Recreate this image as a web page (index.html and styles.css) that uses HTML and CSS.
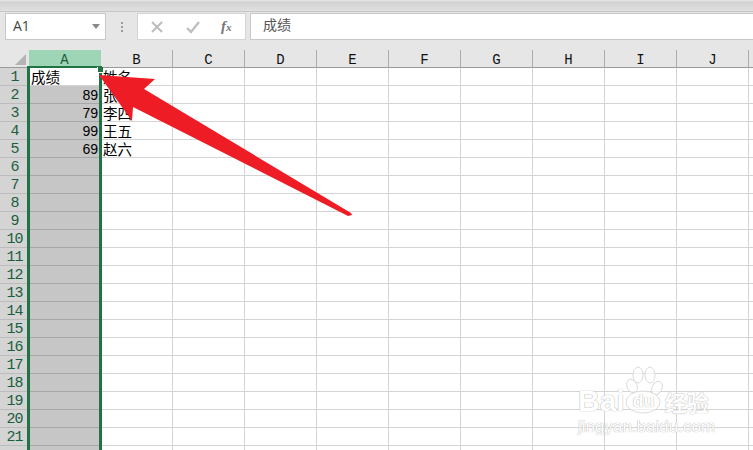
FILE: index.html
```html
<!DOCTYPE html>
<html lang="zh">
<head>
<meta charset="utf-8">
<title>成绩</title>
<link rel="stylesheet" href="styles.css">
</head>
<body>
<div class="app">
  <div class="topbar"></div>
  <div class="fbar">
    <div class="namebox"><span>A1</span><i class="caret"></i></div>
    <div class="dots"><b></b><b></b><b></b></div>
    <div class="fxbox">
      <svg class="ico" viewBox="0 0 14 14"><path d="M2 2 L12 12 M12 2 L2 12" fill="none" stroke="#bcbcbc" stroke-width="2"/></svg>
      <svg class="ico" viewBox="0 0 14 14"><path d="M1 8 L5 12 L13 2" fill="none" stroke="#c0c0c0" stroke-width="2.4"/></svg>
      <span class="fx">f<span class="fx-x">x</span></span>
    </div>
    <div class="finput">成绩</div>
  </div>
  <div class="sheet">
    <table class="grid">
      <thead>
        <tr><th class="corner"><i></i></th><th class="sel">A</th><th>B</th><th>C</th><th>D</th><th>E</th><th>F</th><th>G</th><th>H</th><th>I</th><th>J</th><th></th></tr>
      </thead>
      <tbody>
        <tr><th>1</th><td class="a1 cjk">成绩</td><td class="cjk">姓名</td><td></td><td></td><td></td><td></td><td></td><td></td><td></td><td></td><td></td></tr>
        <tr><th>2</th><td class="ca num">89</td><td class="cjk">张三</td><td></td><td></td><td></td><td></td><td></td><td></td><td></td><td></td><td></td></tr>
        <tr><th>3</th><td class="ca num">79</td><td class="cjk">李四</td><td></td><td></td><td></td><td></td><td></td><td></td><td></td><td></td><td></td></tr>
        <tr><th>4</th><td class="ca num">99</td><td class="cjk">王五</td><td></td><td></td><td></td><td></td><td></td><td></td><td></td><td></td><td></td></tr>
        <tr><th>5</th><td class="ca num">69</td><td class="cjk">赵六</td><td></td><td></td><td></td><td></td><td></td><td></td><td></td><td></td><td></td></tr>
        <tr><th>6</th><td class="ca"></td><td></td><td></td><td></td><td></td><td></td><td></td><td></td><td></td><td></td><td></td></tr>
        <tr><th>7</th><td class="ca"></td><td></td><td></td><td></td><td></td><td></td><td></td><td></td><td></td><td></td><td></td></tr>
        <tr><th>8</th><td class="ca"></td><td></td><td></td><td></td><td></td><td></td><td></td><td></td><td></td><td></td><td></td></tr>
        <tr><th>9</th><td class="ca"></td><td></td><td></td><td></td><td></td><td></td><td></td><td></td><td></td><td></td><td></td></tr>
        <tr><th>10</th><td class="ca"></td><td></td><td></td><td></td><td></td><td></td><td></td><td></td><td></td><td></td><td></td></tr>
        <tr><th>11</th><td class="ca"></td><td></td><td></td><td></td><td></td><td></td><td></td><td></td><td></td><td></td><td></td></tr>
        <tr><th>12</th><td class="ca"></td><td></td><td></td><td></td><td></td><td></td><td></td><td></td><td></td><td></td><td></td></tr>
        <tr><th>13</th><td class="ca"></td><td></td><td></td><td></td><td></td><td></td><td></td><td></td><td></td><td></td><td></td></tr>
        <tr><th>14</th><td class="ca"></td><td></td><td></td><td></td><td></td><td></td><td></td><td></td><td></td><td></td><td></td></tr>
        <tr><th>15</th><td class="ca"></td><td></td><td></td><td></td><td></td><td></td><td></td><td></td><td></td><td></td><td></td></tr>
        <tr><th>16</th><td class="ca"></td><td></td><td></td><td></td><td></td><td></td><td></td><td></td><td></td><td></td><td></td></tr>
        <tr><th>17</th><td class="ca"></td><td></td><td></td><td></td><td></td><td></td><td></td><td></td><td></td><td></td><td></td></tr>
        <tr><th>18</th><td class="ca"></td><td></td><td></td><td></td><td></td><td></td><td></td><td></td><td></td><td></td><td></td></tr>
        <tr><th>19</th><td class="ca"></td><td></td><td></td><td></td><td></td><td></td><td></td><td></td><td></td><td></td><td></td></tr>
        <tr><th>20</th><td class="ca"></td><td></td><td></td><td></td><td></td><td></td><td></td><td></td><td></td><td></td><td></td></tr>
        <tr><th>21</th><td class="ca"></td><td></td><td></td><td></td><td></td><td></td><td></td><td></td><td></td><td></td><td></td></tr>
        <tr><th></th><td class="ca"></td><td></td><td></td><td></td><td></td><td></td><td></td><td></td><td></td><td></td><td></td></tr>
      </tbody>
    </table>
    <div class="selection"><i class="handle"></i></div>
  </div>
  <div class="watermark">
    <svg class="paw" viewBox="0 0 46 50">
      <g fill="#fff" fill-opacity="0.65" stroke="#dcdcdc" stroke-width="1">
        <ellipse cx="12" cy="21" rx="5" ry="7" transform="rotate(-25 12 21)"/>
        <ellipse cx="18" cy="10" rx="5" ry="8"/>
        <ellipse cx="30" cy="10" rx="5" ry="8"/>
        <ellipse cx="37" cy="23" rx="5" ry="7" transform="rotate(25 37 23)"/>
        <ellipse cx="23" cy="37" rx="17" ry="11"/>
      </g>
    </svg>
    <div class="wm-top"><span>Bai</span><span class="wm-du">du</span><span class="wm-cn">经验</span></div>
    <div class="wm-url">jingyan.baidu.com</div>
  </div>
  <svg class="arrow" viewBox="0 0 753 450">
    <polygon points="99,75 155,79 144,89 351,213 352,215 348,216 133,107 132,121" fill="#ee1c25"/>
  </svg>
</div>
</body>
</html>
```

FILE: styles.css
```css
* { box-sizing: border-box; }
html, body { margin: 0; padding: 0; background: #fff; }
.app {
  position: relative;
  width: 753px;
  height: 450px;
  overflow: hidden;
  font-family: "Liberation Mono", "Noto Sans CJK SC", monospace;
}
.topbar {
  height: 12px;
  background: linear-gradient(#e8e8e8 0, #d2d2d2 2px, #e0e0e0 11px, #c6c6c6 11px);
}
.fbar {
  height: 38px;
  display: flex;
  align-items: flex-start;
  background: #e6e6e6;
  padding: 1px 0 0 5px;
}
.namebox, .fxbox, .finput {
  height: 27px;
  background: #fff;
  border: 1px solid #c8c8c8;
}
.namebox {
  width: 101px;
  display: flex;
  align-items: center;
  justify-content: space-between;
  padding: 0 5px 2px 7px;
  font: 14px "Open Sans", "Liberation Sans", sans-serif;
  color: #444;
}
.caret {
  width: 0;
  height: 0;
  margin-top: 2px;
  border-left: 4px solid transparent;
  border-right: 4px solid transparent;
  border-top: 5px solid #8a8a8a;
}
.dots {
  width: 31px;
  height: 27px;
  display: flex;
  flex-direction: column;
  align-items: center;
  justify-content: center;
  gap: 2px;
}
.dots b { width: 2px; height: 2px; background: #9c9c9c; }
.fxbox {
  width: 109px;
  display: flex;
  align-items: center;
  padding-left: 12px;
  gap: 22px;
  border-color: #d4d4d4;
}
.ico { width: 14px; height: 14px; flex: none; }
.fx {
  margin-left: -1px;
  font: italic bold 15px/18px "Liberation Serif", serif;
  color: #777;
}
.fx-x { font-size: 11px; }
.finput {
  flex: 1;
  margin-left: 4px;
  padding-left: 12px;
  font: 14px/20px "Noto Sans CJK SC", sans-serif;
  color: #555;
  border-right: 0;
}
.sheet { position: relative; }
.grid {
  border-collapse: separate;
  border-spacing: 0;
  table-layout: fixed;
  width: 821px;
}
.grid th, .grid td {
  height: 18px;
  padding: 3px 0 0;
  white-space: nowrap;
  line-height: 14px;
}
.grid th:first-child { width: 29px; }
.grid thead th {
  width: 72px;
  background: #e6e6e6;
  border-right: 1px solid #acacac;
  border-bottom: 1px solid #9a9a9a;
  font: 400 14px/14px "Liberation Mono", monospace;
  color: #111;
}
.grid thead th.sel { background: #9fd5b7; color: #1d5a3a; border-right-color: #9fd5b7; }
.grid thead th.corner { position: relative; border-right: 0; }
.corner i {
  position: absolute;
  right: 3px;
  bottom: 2px;
  width: 0;
  height: 0;
  border-left: 11px solid transparent;
  border-bottom: 11px solid #b4b4b4;
}
.grid tbody th {
  background: #d4d4d4;
  border-bottom: 1px solid #bcbcbc;
  font: 400 15px/14px "Liberation Mono", monospace;
  letter-spacing: -1px;
  color: #1a5f3d;
  text-align: center;
}
.grid td {
  border-right: 1px solid #d4d4d4;
  border-bottom: 1px solid #d4d4d4;
  color: #000;
}
.grid td.ca { background: #c6c6c6; border-bottom-color: #a8a8a8; }
.grid td.cjk {
  font: 14.5px/14px "Noto Sans CJK SC", sans-serif;
  padding: 0 0 0 2px;
}
.grid td.a1 { background: #fff; }
.grid td.num {
  font-size: 14px;
  letter-spacing: -0.5px;
  text-align: right;
  padding-right: 2px;
}
.selection {
  position: absolute;
  left: 27px;
  top: 16px;
  width: 75px;
  height: 400px;
  border: 2px solid #217346;
  border-width: 2px 3px 0 3px;
  pointer-events: none;
}
.handle {
  position: absolute;
  right: -4px;
  top: -1px;
  width: 6px;
  height: 6px;
  background: #217346;
  border: 1px solid #fff;
  border-width: 0 0 1px 1px;
}
.arrow {
  position: absolute;
  left: 0;
  top: 0;
  width: 753px;
  height: 450px;
}
.watermark {
  position: absolute;
  left: 578px;
  top: 365px;
  width: 140px;
  height: 70px;
  color: #fff;
  font-family: "Liberation Sans", sans-serif;
  text-shadow: 0 0 1px #aaa, 0 0 1px #ccc;
}
.paw {
  position: absolute;
  left: 42px;
  top: 0;
  width: 46px;
  height: 50px;
}
.wm-top {
  position: relative;
  display: flex;
  align-items: center;
  margin-top: 24px;
  height: 24px;
  font-size: 30px;
  font-weight: 700;
  line-height: 24px;
}
.wm-du { font-size: 18px; margin-left: 8px; }
.wm-cn {
  margin-left: 10px;
  font: 700 22px/24px "Noto Sans CJK SC", sans-serif;
}
.wm-url {
  position: relative;
  margin-top: 5px;
  font-size: 17px;
  line-height: 17px;
  white-space: nowrap;
}
```
